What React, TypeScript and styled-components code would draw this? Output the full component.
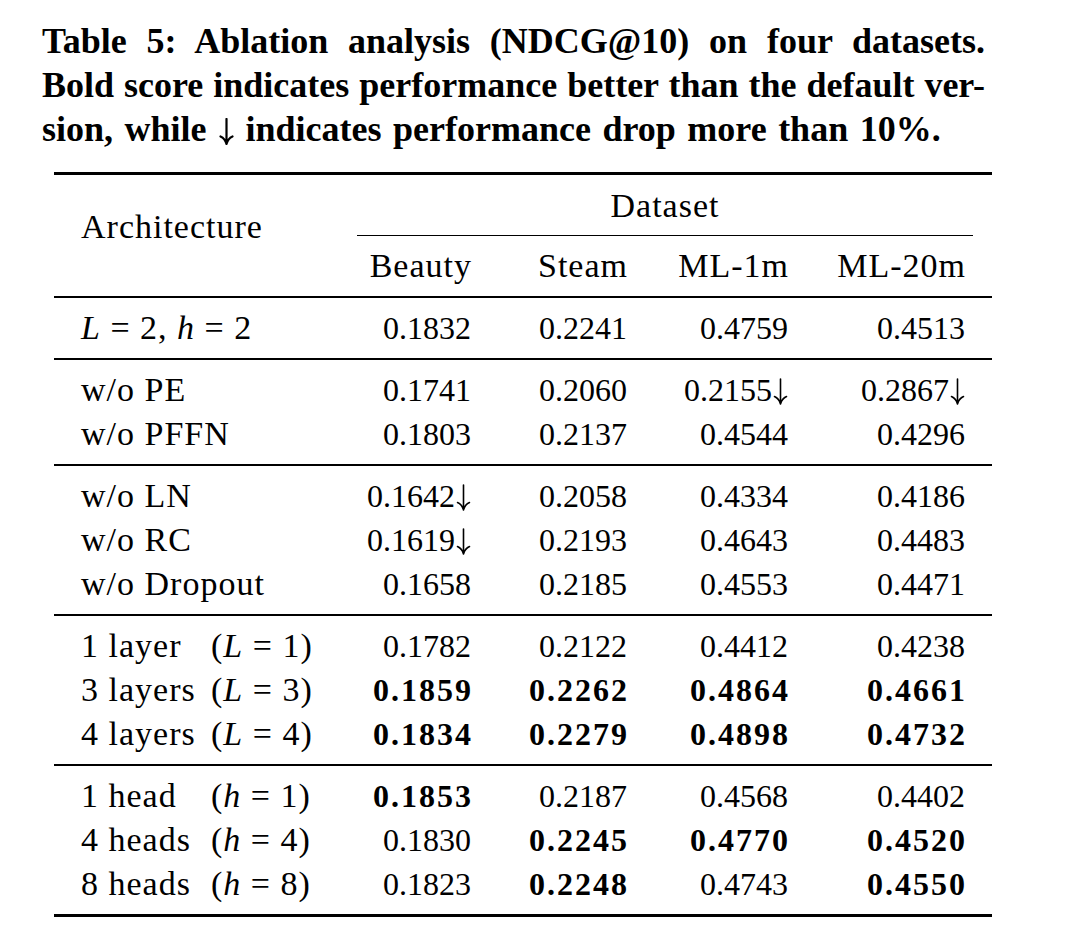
import React from 'react';
import styled, { createGlobalStyle } from 'styled-components';

const GlobalStyle = createGlobalStyle`
  html, body {
    margin: 0;
    padding: 0;
    background: #ffffff;
  }
  body {
    font-family: "Liberation Serif", "Times New Roman", serif;
    color: #000000;
  }
`;

const Page = styled.div`
  width: 1080px;
  box-sizing: border-box;
  padding: 19px 0 0 42px;
`;

const Caption = styled.div`
  width: 943px;
  font-size: 36px;
  font-weight: 700;
  line-height: 44px;
`;

const CaptionLine = styled.div<{ $justify?: boolean }>`
  text-align: ${(p) => (p.$justify ? 'justify' : 'left')};
  text-align-last: ${(p) => (p.$justify ? 'justify' : 'auto')};
  word-spacing: ${(p) => (p.$justify ? 0 : 2.5)}px;
`;

const Table = styled.div`
  margin: 21px 0 0 12px;
  width: 938px;
  font-size: 32px;
  line-height: 44px;
`;

const Rule = styled.div<{ $heavy?: boolean }>`
  height: ${(p) => (p.$heavy ? 3 : 2)}px;
  background: #000000;
`;

const Grid = styled.div`
  display: grid;
  grid-template-columns: 276px 168px 156px 161px 177px;
`;

const Header = styled(Grid)`
  grid-template-rows: 44px 16px 44px;
  padding: 9px 0 8px;
`;

const Group = styled(Grid)`
  grid-auto-rows: 44px;
  padding: 8px 0;
`;

const ArchCell = styled.div`
  grid-column: 1;
  grid-row: 1 / 4;
  align-self: center;
  padding: 0 0 18px 27px;
  font-size: 34px;
  letter-spacing: 1px;
  white-space: nowrap;
`;

const SpanTitle = styled.div`
  grid-column: 2 / 6;
  grid-row: 1;
  margin: 0 19px 0 27px;
  text-align: center;
  font-size: 34px;
  letter-spacing: 1px;
`;

const CMidRule = styled.div`
  grid-column: 2 / 6;
  grid-row: 2;
  margin: 7px 19px 0 27px;
  height: 1px;
  background: #000000;
`;

const ColHead = styled.div`
  grid-row: 3;
  padding-right: 26px;
  text-align: right;
  font-size: 34px;
  letter-spacing: 1px;
  white-space: nowrap;
`;

const LabelCell = styled.div`
  display: flex;
  padding-left: 27px;
  font-size: 34px;
  letter-spacing: 1px;
  white-space: nowrap;
`;

const LabelName = styled.span<{ $fixed?: boolean }>`
  display: inline-block;
  width: ${(p) => (p.$fixed ? '130px' : 'auto')};
`;

const Var = styled.i`
  font-style: italic;
`;

const NumCell = styled.div<{ $bold?: boolean }>`
  padding-right: ${(p) => (p.$bold ? 25 : 27)}px;
  text-align: right;
  font-weight: ${(p) => (p.$bold ? 700 : 400)};
  letter-spacing: ${(p) => (p.$bold ? 2 : 0)}px;
  white-space: nowrap;
`;

const ArrowSvg = styled.svg<{ $gap: number }>`
  display: inline-block;
  width: 15px;
  height: 27px;
  vertical-align: -4px;
  margin: 0 ${(p) => p.$gap}px 0 1px;
`;

function DownArrow({ gap = 0, weight = 1.6 }: { gap?: number; weight?: number }) {
  return (
    <ArrowSvg $gap={gap} viewBox="0 0 15 27" aria-label="↓">
      <path
        d="M7.5 1 V25.5 M1.5 18.5 Q6 20.5 7.5 26 Q9 20.5 13.5 18.5"
        fill="none"
        stroke="currentColor"
        strokeWidth={weight}
        strokeLinecap="round"
        strokeLinejoin="round"
      />
    </ArrowSvg>
  );
}

type Row = { name: React.ReactNode; param?: React.ReactNode; vals: string[] };

const groups: Row[][] = [
  [
    {
      name: (
        <>
          <Var>L</Var>
          {' = 2, '}
          <Var>h</Var>
          {' = 2'}
        </>
      ),
      vals: ['0.1832', '0.2241', '0.4759', '0.4513'],
    },
  ],
  [
    { name: 'w/o PE', vals: ['0.1741', '0.2060', '0.2155!', '0.2867!'] },
    { name: 'w/o PFFN', vals: ['0.1803', '0.2137', '0.4544', '0.4296'] },
  ],
  [
    { name: 'w/o LN', vals: ['0.1642!', '0.2058', '0.4334', '0.4186'] },
    { name: 'w/o RC', vals: ['0.1619!', '0.2193', '0.4643', '0.4483'] },
    { name: 'w/o Dropout', vals: ['0.1658', '0.2185', '0.4553', '0.4471'] },
  ],
  [
    {
      name: '1 layer',
      param: (
        <>
          (<Var>L</Var>
          {' = 1)'}
        </>
      ),
      vals: ['0.1782', '0.2122', '0.4412', '0.4238'],
    },
    {
      name: '3 layers',
      param: (
        <>
          (<Var>L</Var>
          {' = 3)'}
        </>
      ),
      vals: ['*0.1859', '*0.2262', '*0.4864', '*0.4661'],
    },
    {
      name: '4 layers',
      param: (
        <>
          (<Var>L</Var>
          {' = 4)'}
        </>
      ),
      vals: ['*0.1834', '*0.2279', '*0.4898', '*0.4732'],
    },
  ],
  [
    {
      name: '1 head',
      param: (
        <>
          (<Var>h</Var>
          {' = 1)'}
        </>
      ),
      vals: ['*0.1853', '0.2187', '0.4568', '0.4402'],
    },
    {
      name: '4 heads',
      param: (
        <>
          (<Var>h</Var>
          {' = 4)'}
        </>
      ),
      vals: ['0.1830', '*0.2245', '*0.4770', '*0.4520'],
    },
    {
      name: '8 heads',
      param: (
        <>
          (<Var>h</Var>
          {' = 8)'}
        </>
      ),
      vals: ['0.1823', '*0.2248', '0.4743', '*0.4550'],
    },
  ],
];

const columns = ['Beauty', 'Steam', 'ML-1m', 'ML-20m'];

function Value({ raw }: { raw: string }) {
  const bold = raw.startsWith('*');
  const drop = raw.endsWith('!');
  const text = raw.replace('*', '').replace('!', '');
  return (
    <NumCell $bold={bold}>
      {text}
      {drop && <DownArrow />}
    </NumCell>
  );
}

export default function App() {
  return (
    <>
      <GlobalStyle />
      <Page>
        <Caption>
          <CaptionLine $justify>Table 5: Ablation analysis (NDCG@10) on four datasets.</CaptionLine>
          <CaptionLine $justify>Bold score indicates performance better than the default ver-</CaptionLine>
          <CaptionLine>
            sion, while <DownArrow gap={0} weight={2.2} /> indicates performance drop more than 10%.
          </CaptionLine>
        </Caption>
        <Table>
          <Rule $heavy />
          <Header>
            <ArchCell>Architecture</ArchCell>
            <SpanTitle>Dataset</SpanTitle>
            <CMidRule />
            {columns.map((c, i) => (
              <ColHead key={c} style={{ gridColumn: i + 2 }}>
                {c}
              </ColHead>
            ))}
          </Header>
          {groups.map((g, gi) => (
            <React.Fragment key={gi}>
              <Rule $heavy={false} />
              <Group>
                {g.map((r, ri) => (
                  <React.Fragment key={ri}>
                    <LabelCell>
                      <LabelName $fixed={!!r.param}>{r.name}</LabelName>
                      {r.param && <span>{r.param}</span>}
                    </LabelCell>
                    {r.vals.map((v, vi) => (
                      <Value key={vi} raw={v} />
                    ))}
                  </React.Fragment>
                ))}
              </Group>
            </React.Fragment>
          ))}
          <Rule $heavy />
        </Table>
      </Page>
    </>
  );
}
